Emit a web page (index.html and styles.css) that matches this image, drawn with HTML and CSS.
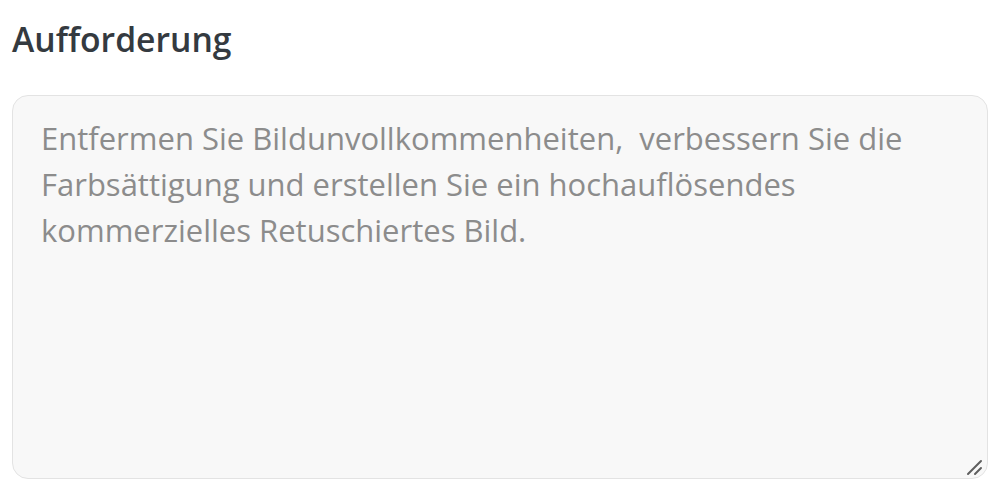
FILE: index.html
```html
<!DOCTYPE html>
<html lang="de">
<head>
<meta charset="utf-8">
<link rel="stylesheet" href="styles.css">
</head>
<body>
<div class="field">
  <label class="title" for="prompt">Aufforderung</label>
  <div class="box">
    <textarea id="prompt" class="prompt" placeholder="Entfermen Sie Bildunvollkommenheiten,  verbessern Sie die Farbsättigung und erstellen Sie ein hochauflösendes kommerzielles Retuschiertes Bild."></textarea>
    <svg class="grip" width="18" height="18" viewBox="0 0 18 18"><path d="M2 16 L15 3 M9 16 L15 10" stroke="#5f5f5f" stroke-width="2" stroke-linecap="round" fill="none"/></svg>
  </div>
</div>
</body>
</html>
```

FILE: styles.css
```css
html, body {
  margin: 0;
  padding: 0;
  background: #ffffff;
  width: 1000px;
  height: 500px;
  overflow: hidden;
}
.field {
  display: flex;
  flex-direction: column;
  padding: 16px 12px 0 12px;
  font-family: "Open Sans", "Noto Sans", sans-serif;
}
.title {
  font-size: 33.7px;
  font-weight: 600;
  color: #343a40;
  line-height: 46px;
  margin-bottom: 33px;
}
.box {
  position: relative;
  width: 976px;
  height: 384px;
}
.prompt {
  display: block;
  box-sizing: border-box;
  width: 976px;
  height: 384px;
  background: #f8f8f8;
  border: 1.5px solid #e3e3e3;
  border-radius: 16px;
  padding: 19px 28px;
  font-family: "Open Sans", "Noto Sans", sans-serif;
  font-size: 31px;
  line-height: 46px;
  color: #444;
  outline: none;
  resize: none;
}
.prompt::placeholder {
  color: #8c8c8c;
}
.grip {
  position: absolute;
  right: 4px;
  bottom: 3px;
  pointer-events: none;
}
```
